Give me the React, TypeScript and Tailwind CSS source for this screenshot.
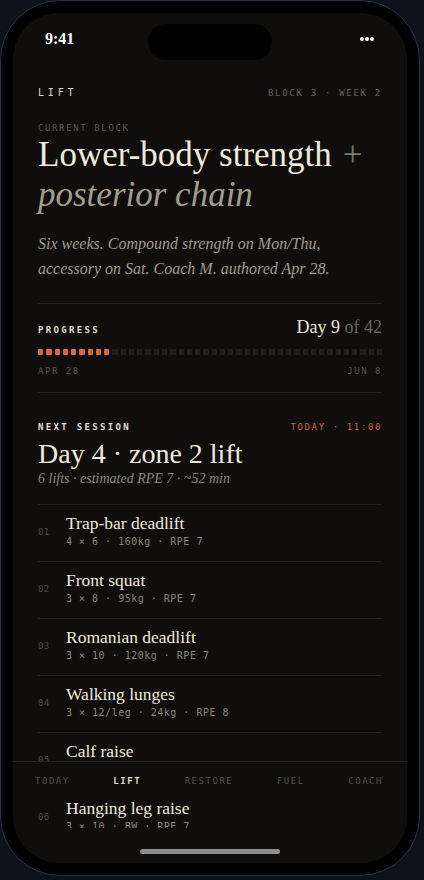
import React from "react";

const SERIF = "font-['Liberation_Serif',serif]";
const MONO = "font-['DejaVu_Sans_Mono',monospace]";

type Lift = { n: string; name: string; meta: string };

const LIFTS: Lift[] = [
  { n: "01", name: "Trap-bar deadlift", meta: "4 × 6 · 160kg · RPE 7" },
  { n: "02", name: "Front squat", meta: "3 × 8 · 95kg · RPE 7" },
  { n: "03", name: "Romanian deadlift", meta: "3 × 10 · 120kg · RPE 7" },
  { n: "04", name: "Walking lunges", meta: "3 × 12/leg · 24kg · RPE 8" },
  { n: "05", name: "Calf raise", meta: "4 × 15 · 60kg · RPE 7" },
  { n: "06", name: "Hanging leg raise", meta: "3 × 10 · BW · RPE 7" },
];

const TABS = ["TODAY", "LIFT", "RESTORE", "FUEL", "COACH"];

const TOTAL_DAYS = 42;
const CURRENT_DAY = 9;

export default function App() {
  return (
    <div className="min-h-screen bg-[#0c111a]">
      <div className="h-[876px] w-[420px] rounded-[60px] border border-[#27314a] bg-black p-[12px]">
        <div className="relative flex h-full flex-col overflow-hidden rounded-[46px] bg-[#0f0e0d]">
          {/* status bar */}
          <div className="flex h-[52px] shrink-0 items-center justify-between pl-[32px] pr-[33px]">
            <span className={`${SERIF} text-[16px] font-bold leading-none text-white`}>9:41</span>
            <span className="flex gap-[1px]">
              <span className="h-[4px] w-[4px] rounded-full bg-white" />
              <span className="h-[4px] w-[4px] rounded-full bg-white" />
              <span className="h-[4px] w-[4px] rounded-full bg-white" />
            </span>
          </div>
          <div className="absolute left-1/2 top-[11px] h-[36px] w-[124px] -translate-x-1/2 rounded-full bg-black" />

          {/* scroll area */}
          <div className="h-[763px] shrink-0 overflow-hidden px-[25px] pt-[21px]">
            <div className={`${MONO} flex items-center justify-between leading-[14px]`}>
              <span className="text-[10px] tracking-[0.38em] text-[#dcd7ca]">LIFT</span>
              <span className="text-[9px] tracking-[0.19em] text-[#66625b]">BLOCK 3 · WEEK 2</span>
            </div>

            <div className={`${MONO} mt-[22px] text-[9px] leading-[12px] tracking-[0.18em] text-[#5c5852]`}>
              CURRENT BLOCK
            </div>
            <h1 className={`${SERIF} mt-[1px] whitespace-nowrap text-[35px] leading-[40px] text-[#efeadc]`}>
              Lower-body strength <span className="italic text-[#7e796d]">+</span>
              <br />
              <span className="italic text-[#a39d8c]">posterior chain</span>
            </h1>
            <p className={`${SERIF} mt-[17px] text-[16px] italic leading-[24.5px] text-[#a29c8e]`}>
              Six weeks. Compound strength on Mon/Thu, accessory on Sat. Coach M. authored Apr 28.
            </p>

            {/* progress */}
            <div className="mt-[22px] border-t border-[#262422] pt-[10px]">
              <div className="flex items-baseline justify-between">
                <span className={`${MONO} text-[9px] font-bold tracking-[0.26em] text-[#e2ddd0]`}>PROGRESS</span>
                <span className={`${SERIF} text-[18px] text-[#efeadc]`}>
                  Day {CURRENT_DAY} <span className="text-[#6b665e]">of {TOTAL_DAYS}</span>
                </span>
              </div>
              <div className="mt-[8px] flex gap-[3px]">
                {Array.from({ length: TOTAL_DAYS }, (_, i) => (
                  <span
                    key={i}
                    className={`h-[6px] flex-1 rounded-[1px] ${i < CURRENT_DAY ? "bg-[#d7693c]" : "bg-[#222020]"}`}
                  />
                ))}
              </div>
              <div className={`${MONO} mt-[10px] flex justify-between text-[9px] leading-[12px] tracking-[0.17em] text-[#5a5650]`}>
                <span>APR 28</span>
                <span>JUN 8</span>
              </div>
            </div>

            {/* next session */}
            <div className="mt-[15px] border-t border-[#262422] pt-[28px]">
              <div className={`${MONO} flex items-center justify-between leading-[12px]`}>
                <span className="text-[9px] font-bold tracking-[0.26em] text-[#e2ddd0]">NEXT SESSION</span>
                <span className="text-[9px] tracking-[0.18em] text-[#c8683e]">TODAY · 11:00</span>
              </div>
              <h2 className={`${SERIF} mt-[5px] text-[28px] leading-[32px] text-[#efeadc]`}>Day 4 · zone 2 lift</h2>
              <p className={`${SERIF} text-[14px] italic leading-[18px] text-[#8e897e]`}>
                6 lifts · estimated RPE 7 · ~52 min
              </p>
            </div>

            <div className="mt-[16px]">
              {LIFTS.map((l) => (
                <div key={l.n} className="flex items-center border-t border-[#242220] pb-[12px] pt-[8px]">
                  <span className={`${MONO} mt-[3px] w-[28px] shrink-0 text-[9px] tracking-[0.05em] text-[#4f4b46]`}>
                    {l.n}
                  </span>
                  <div>
                    <div className={`${SERIF} text-[17.5px] leading-[20px] text-[#efeadc]`}>{l.name}</div>
                    <div className={`${MONO} mt-[2px] text-[10px] leading-[14px] tracking-[0.05em] text-[#8b867b]`}>
                      {l.meta}
                    </div>
                  </div>
                </div>
              ))}
            </div>
          </div>

          {/* tab bar */}
          <div className="absolute left-0 right-0 top-[748px] flex h-[40px] items-center justify-between border-t border-[#262422] bg-[#0f0e0d] pl-[22px] pr-[24px]">
            {TABS.map((t) => (
              <span
                key={t}
                className={`${MONO} text-[9px] tracking-[0.17em] ${t === "LIFT" ? "font-bold text-[#ddd8cb]" : "text-[#56524c]"}`}
              >
                {t}
              </span>
            ))}
          </div>

          {/* home indicator */}
          <div className="mx-auto mt-[21px] h-[5px] w-[140px] shrink-0 rounded-full bg-[#8e8e8e]" />
        </div>
      </div>
    </div>
  );
}
